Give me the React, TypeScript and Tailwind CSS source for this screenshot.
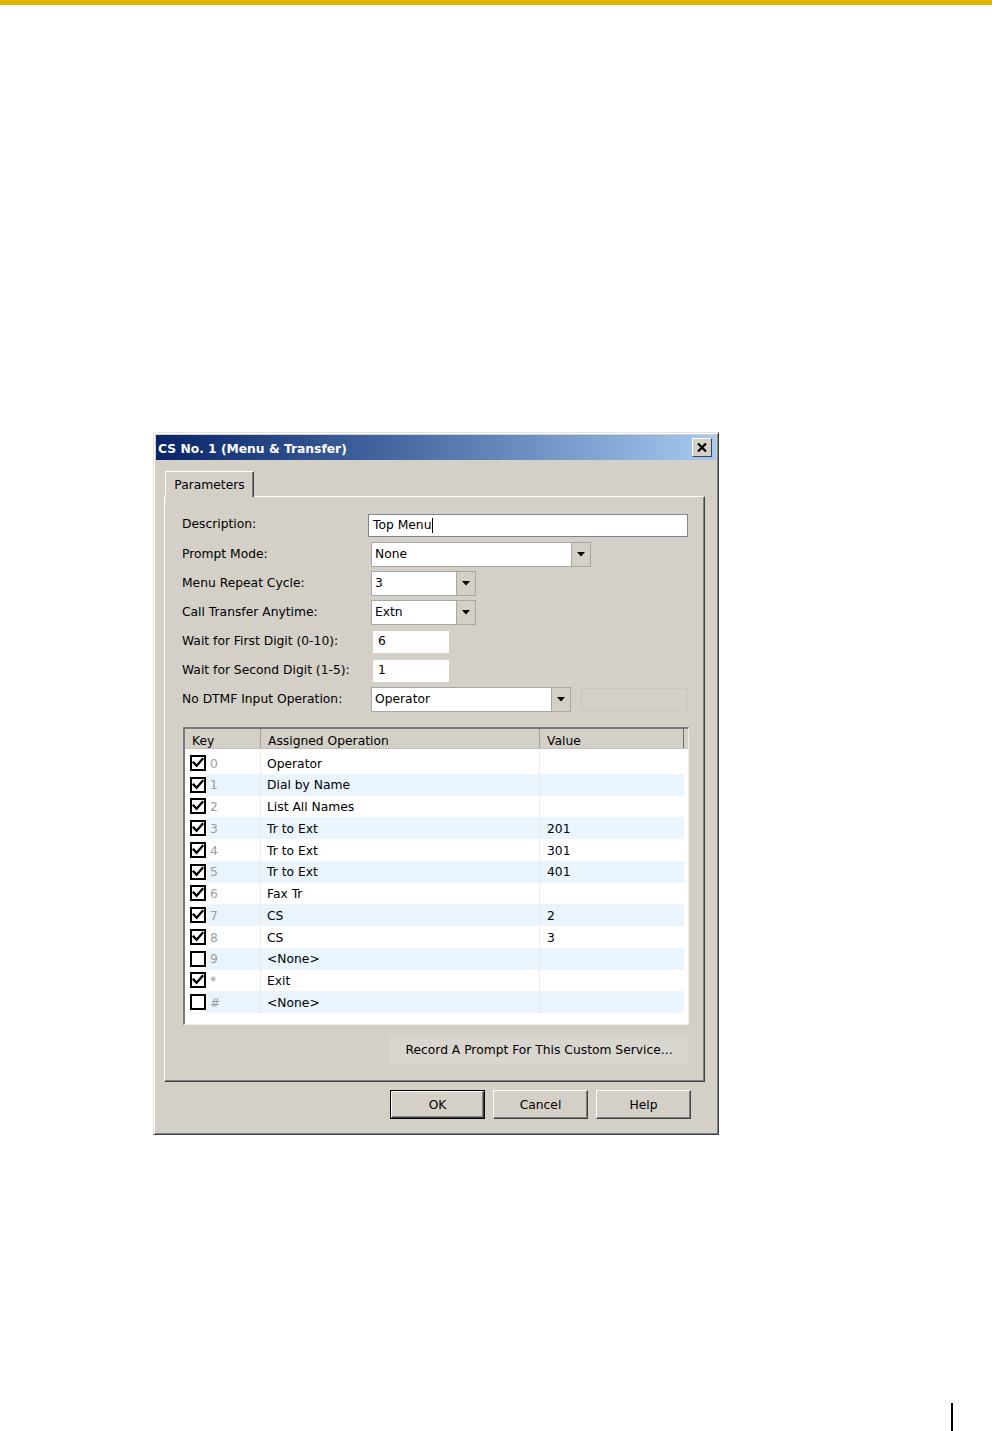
import React from "react";

function Arrow() {
  return (
    <svg width="8" height="5" viewBox="0 0 8 5">
      <path d="M0 0 H8 L4 4.5 Z" fill="#000" />
    </svg>
  );
}

function Select({ w, value }: { w: string; value: string }) {
  return (
    <div className={`flex h-[25px] ${w} border border-[#a7a7a7] bg-white`}>
      <div className="flex flex-1 items-center pl-[3px]">{value}</div>
      <div className="flex w-[19px] items-center justify-center border-l border-[#a7a7a7] bg-[#d4d0c8]">
        <Arrow />
      </div>
    </div>
  );
}

function Check({ on }: { on: boolean }) {
  return (
    <svg width="16" height="16" viewBox="0 0 16 16" className="block">
      <rect x="1" y="1" width="14" height="14" fill="#fff" stroke="#000" strokeWidth="2" />
      {on && (
        <path d="M3.6 7.6 L6.6 10.8 L12.4 4.2" fill="none" stroke="#000" strokeWidth="2.3" strokeLinecap="square" />
      )}
    </svg>
  );
}

const rows: { on: boolean; k: string; op: string; v: string }[] = [
  { on: true, k: "0", op: "Operator", v: "" },
  { on: true, k: "1", op: "Dial by Name", v: "" },
  { on: true, k: "2", op: "List All Names", v: "" },
  { on: true, k: "3", op: "Tr to Ext", v: "201" },
  { on: true, k: "4", op: "Tr to Ext", v: "301" },
  { on: true, k: "5", op: "Tr to Ext", v: "401" },
  { on: true, k: "6", op: "Fax Tr", v: "" },
  { on: true, k: "7", op: "CS", v: "2" },
  { on: true, k: "8", op: "CS", v: "3" },
  { on: false, k: "9", op: "<None>", v: "" },
  { on: true, k: "*", op: "Exit", v: "" },
  { on: false, k: "#", op: "<None>", v: "" },
];

function Btn({ label, def }: { label: string; def?: boolean }) {
  return (
    <div
      className={`flex h-[29px] w-[95px] items-center justify-center ${
        def ? "border border-black" : ""
      }`}
    >
      <div className="flex h-full w-full items-center justify-center border-l border-t border-l-white border-t-white border-r border-b border-r-[#404040] border-b-[#404040] shadow-[inset_-1px_-1px_0_#808080]">
        <span className="translate-y-[1px]">{label}</span>
      </div>
    </div>
  );
}

export default function App() {
  return (
    <div className="min-h-[1431px] w-[992px] bg-white font-['DejaVu_Sans',sans-serif] text-[12.3px] leading-none text-black">
      <div className="h-[5px] bg-[#dfb700]" />

      {/* Dialog */}
      <div className="ml-[153px] mt-[427px] flex h-[703px] w-[566px] flex-col border border-l-[#e6e3dc] border-t-[#e6e3dc] border-r-[#404040] border-b-[#404040] bg-[#d4d0c8] p-[2px] shadow-[inset_1px_1px_0_#fff,inset_-1px_-1px_0_#808080]">
        {/* Title bar */}
        <div className="flex h-[25px] items-center justify-between bg-gradient-to-r from-[#0a246a] to-[#a6caf0] pl-[2px] pr-[4px]">
          <span className="translate-y-[2px] font-bold text-white">CS No. 1 (Menu &amp; Transfer)</span>
          <div className="flex h-[19px] w-[20px] items-center justify-center border-l border-t border-l-white border-t-white border-r border-b border-r-[#404040] border-b-[#404040] bg-[#d4d0c8]">
            <svg width="10" height="9" viewBox="0 0 10 9">
              <path d="M1 0.5 L9 8.5 M9 0.5 L1 8.5" stroke="#000" strokeWidth="2.2" />
            </svg>
          </div>
        </div>

        {/* Tab */}
        <div className="ml-[9px] mt-[11px] flex">
          <div className="relative z-10 -mb-[1px] flex h-[26px] w-[89px] items-center justify-center border-l border-t border-l-white border-t-white border-r border-r-[#404040] bg-[#d4d0c8] shadow-[inset_-1px_0_0_#808080]">
            <span className="translate-y-[1px]">Parameters</span>
          </div>
        </div>

        {/* Panel */}
        <div className="ml-[8px] flex h-[586px] w-[541px] flex-col border-l border-t border-l-white border-t-white border-r border-b border-r-[#404040] border-b-[#404040] pl-[17px] pt-[13px] shadow-[inset_-1px_-1px_0_#808080]">
          {/* Description */}
          <div className="flex h-[30px] items-center">
            <div className="w-[186px] -translate-y-[1px]">Description:</div>
            <div className="flex h-[23px] w-[320px] items-center border border-[#7b8591] bg-white pl-[4px]">
              Top Menu<span className="ml-[1px] inline-block h-[15px] w-[1px] bg-black" />
            </div>
          </div>
          <div className="flex h-[29px] items-center">
            <div className="w-[186px]">Prompt Mode:</div>
            <div className="ml-[3px]">
              <Select w="w-[220px]" value="None" />
            </div>
          </div>
          <div className="flex h-[29px] items-center">
            <div className="w-[186px]">Menu Repeat Cycle:</div>
            <div className="ml-[3px]">
              <Select w="w-[105px]" value="3" />
            </div>
          </div>
          <div className="flex h-[29px] items-center">
            <div className="w-[186px]">Call Transfer Anytime:</div>
            <div className="ml-[3px]">
              <Select w="w-[105px]" value="Extn" />
            </div>
          </div>
          <div className="flex h-[29px] items-center">
            <div className="w-[186px]">Wait for First Digit (0-10):</div>
            <div className="ml-[5px] flex h-[22px] w-[76px] items-center bg-white pl-[5px]">6</div>
          </div>
          <div className="flex h-[29px] items-center">
            <div className="w-[186px]">Wait for Second Digit (1-5):</div>
            <div className="ml-[5px] flex h-[22px] w-[76px] items-center bg-white pl-[5px]">1</div>
          </div>
          <div className="flex h-[29px] items-center">
            <div className="w-[186px]">No DTMF Input Operation:</div>
            <div className="ml-[3px]">
              <Select w="w-[200px]" value="Operator" />
            </div>
            <div className="ml-[10px] h-[23px] w-[107px] border border-[#cac6be]" />
          </div>

          {/* List */}
          <div className="ml-[1px] mt-[13px] flex h-[298px] w-[506px] flex-col border-l-2 border-t-2 border-l-[#7a7a7a] border-t-[#7a7a7a] border-r border-b border-r-[#f0efeb] border-b-[#f0efeb] bg-white">
            <div className="flex h-[20px] border-b border-b-[#c4c0b8] bg-[#d4d0c8]">
              <div className="flex w-[76px] items-center border-r border-r-[#a6a29a] pl-[7px]">
                <span className="translate-y-[3px]">Key</span>
              </div>
              <div className="flex w-[279px] items-center border-r border-r-[#a6a29a] pl-[7px]">
                <span className="translate-y-[3px]">Assigned Operation</span>
              </div>
              <div className="flex w-[144px] items-center border-r border-r-[#6e6e6e] pl-[7px]">
                <span className="translate-y-[3px]">Value</span>
              </div>
            </div>
            <div className="flex flex-col pt-[3px]">
              {rows.map((r, i) => (
                <div key={i} className="flex h-[21.75px] w-[499px]">
                  <div className="flex w-[22px] items-center pl-[5px]">
                    <Check on={r.on} />
                  </div>
                  <div className={`flex flex-1 ${i % 2 === 1 ? "bg-[#eaf4fc]" : "bg-white"}`}>
                    <div className="flex w-[54px] items-center border-r border-r-[#ecebe8] pl-[3px] text-[#9b9b9b]">
                      <span className="translate-y-[1px]">{r.k}</span>
                    </div>
                    <div className="flex w-[279px] items-center border-r border-r-[#ecebe8] pl-[6px]">
                      <span className="translate-y-[1px]">{r.op}</span>
                    </div>
                    <div className="flex flex-1 items-center pl-[7px]">
                      <span className="translate-y-[1px]">{r.v}</span>
                    </div>
                  </div>
                </div>
              ))}
            </div>
          </div>

          {/* Record */}
          <div className="ml-[208px] mt-[10px] flex h-[29px] w-[298px] items-center justify-center bg-[#d9d6cf]">
            <span className="translate-y-[1px]">Record A Prompt For This Custom Service...</span>
          </div>
        </div>

        {/* Buttons */}
        <div className="ml-[234px] mt-[8px] flex gap-[8px]">
          <Btn label="OK" def />
          <Btn label="Cancel" />
          <Btn label="Help" />
        </div>
      </div>

      <div className="ml-[951px] mt-[268px] h-[28px] w-[2px] bg-black" />
    </div>
  );
}
